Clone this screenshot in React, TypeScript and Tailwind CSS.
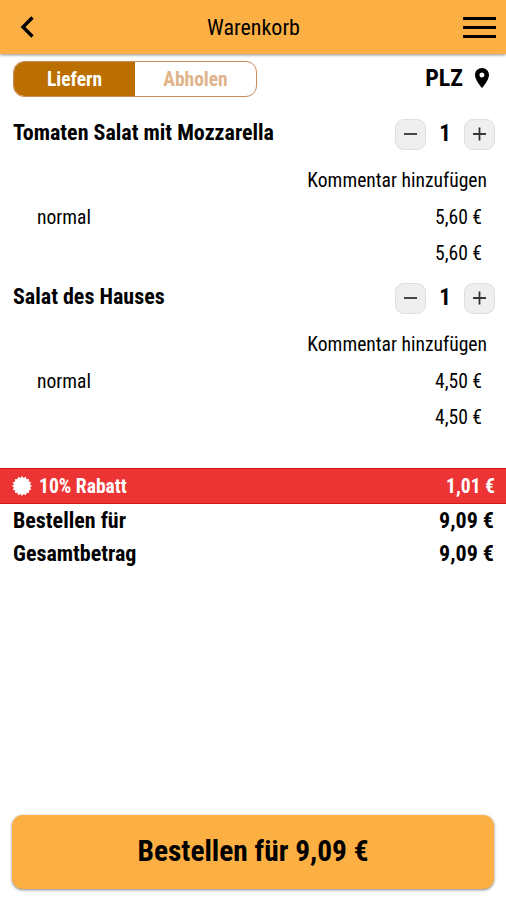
import React from 'react';

interface CartItem {
  name: string;
  count: number;
  variant: string;
  price: string;
}

const items: CartItem[] = [
  { name: 'Tomaten Salat mit Mozzarella', count: 1, variant: 'normal', price: '5,60 €' },
  { name: 'Salat des Hauses', count: 1, variant: 'normal', price: '4,50 €' },
];

export default function App() {
  return (
    <div className="flex h-[900px] w-full flex-col overflow-hidden bg-white font-['Roboto_Condensed','Roboto',sans-serif] text-black [font-stretch:75%]">
      <header className="grid h-[54px] shrink-0 grid-cols-[1fr_auto_1fr] items-center bg-[#fcb044] pr-[10px] pl-5 shadow-[0_1px_3px_rgba(0,0,0,0.45)]">
        <button aria-label="Zurück">
          <svg width="14" height="22" viewBox="0 0 14 22" fill="none" stroke="currentColor" strokeWidth="3.4">
            <path d="M12.5 1.5 3 11l9.5 9.5" />
          </svg>
        </button>
        <h1 className="mr-[9px] pt-0.5 text-[22px] leading-none">Warenkorb</h1>
        <button aria-label="Menü" className="flex flex-col gap-[6px] justify-self-end">
          <span className="h-[3px] w-[33px] bg-black" />
          <span className="h-[3px] w-[33px] bg-black" />
          <span className="h-[3px] w-[33px] bg-black" />
        </button>
      </header>

      <div className="mt-[7px] flex h-9 shrink-0 items-center justify-between px-3">
        <div className="ml-px flex h-full w-[244px] overflow-hidden rounded-[11px] border border-[#c98a5e] text-[19.5px] font-bold">
          <button className="w-[121px] bg-[#ba6f00] pt-0.5 text-white">Liefern</button>
          <button className="flex-1 pt-0.5 text-[#e0b48a]">Abholen</button>
        </div>
        <div className="flex items-center gap-3 pr-[5px] pb-0.5 text-2xl font-bold">
          <span>PLZ</span>
          <svg width="14" height="20" viewBox="5 2 14 20" fill="currentColor">
            <path d="M12 2C8.13 2 5 5.13 5 9c0 5.25 7 13 7 13s7-7.75 7-13c0-3.87-3.13-7-7-7zm0 9.5a2.5 2.5 0 1 1 0-5 2.5 2.5 0 0 1 0 5z" />
          </svg>
        </div>
      </div>

      <main className="h-[371px] shrink-0 pt-[14px]">
        {items.map((item) => (
          <Item key={item.name} item={item} />
        ))}
      </main>

      <div className="flex h-9 shrink-0 items-center justify-between border-y border-[#d91616] bg-[#ec3434] pr-[11px] pl-3 text-[19.6px] font-bold text-white">
        <div className="flex items-center gap-[7px]">
          <Seal />
          <span className="pt-0.5">10% Rabatt</span>
        </div>
        <span className="pt-0.5">1,01 €</span>
      </div>
      <Total label="Bestellen für" value="9,09 €" />
      <Total label="Gesamtbetrag" value="9,09 €" />

      <button className="mx-3 mt-auto mb-[11px] h-[74px] shrink-0 rounded-[11px] bg-[#fcb044] pb-px text-[29.4px] font-bold shadow-[0_1px_3px_rgba(0,0,0,0.5)]">
        Bestellen für 9,09 €
      </button>
    </div>
  );
}

const Item: React.FC<{ item: CartItem }> = ({ item }) => (
  <section className="h-[164px] text-[19.6px] leading-9">
    <div className="mb-[6px] flex h-[46px] items-center justify-between pr-[11px] pl-[13px] text-[22px] font-bold">
      <h2 className="pb-[3px]">{item.name}</h2>
      <div className="flex items-center">
        <StepButton label="Weniger" />
        <span className="w-[38px] text-center text-[23px]">{item.count}</span>
        <StepButton label="Mehr" plus />
      </div>
    </div>
    <div className="pr-[19px] text-right">Kommentar hinzufügen</div>
    <div className="flex justify-between pt-px pr-6 pl-[37px]">
      <span>{item.variant}</span>
      <span>{item.price}</span>
    </div>
    <div className="pr-6 text-right">{item.price}</div>
  </section>
);

const StepButton: React.FC<{ label: string; plus?: boolean }> = ({ label, plus }) => (
  <button aria-label={label} className="flex h-[31px] w-[31px] items-center justify-center rounded-[9px] border border-[#dedede] bg-[#efefef]">
    <svg width="13" height="14" viewBox="0 0 13 14" stroke="#333" strokeWidth="1.8">
      <path d={plus ? 'M0 7h13M6.5.5v13' : 'M0 7h13'} />
    </svg>
  </button>
);

const Total: React.FC<{ label: string; value: string }> = ({ label, value }) => (
  <div className="flex h-[33px] shrink-0 items-center justify-between pr-3 pl-[13px] text-[22px] font-bold">
    <span>{label}</span>
    <span>{value}</span>
  </div>
);

// 16-pointed discount seal
const Seal: React.FC = () => {
  const points = Array.from({ length: 32 }, (_, i) => {
    const r = i % 2 ? 8.2 : 10;
    const a = (i * Math.PI) / 16;
    return `${(10 + r * Math.sin(a)).toFixed(2)},${(10 - r * Math.cos(a)).toFixed(2)}`;
  }).join(' ');
  return (
    <svg width="20" height="20" viewBox="0 0 20 20" fill="currentColor">
      <polygon points={points} />
    </svg>
  );
};
